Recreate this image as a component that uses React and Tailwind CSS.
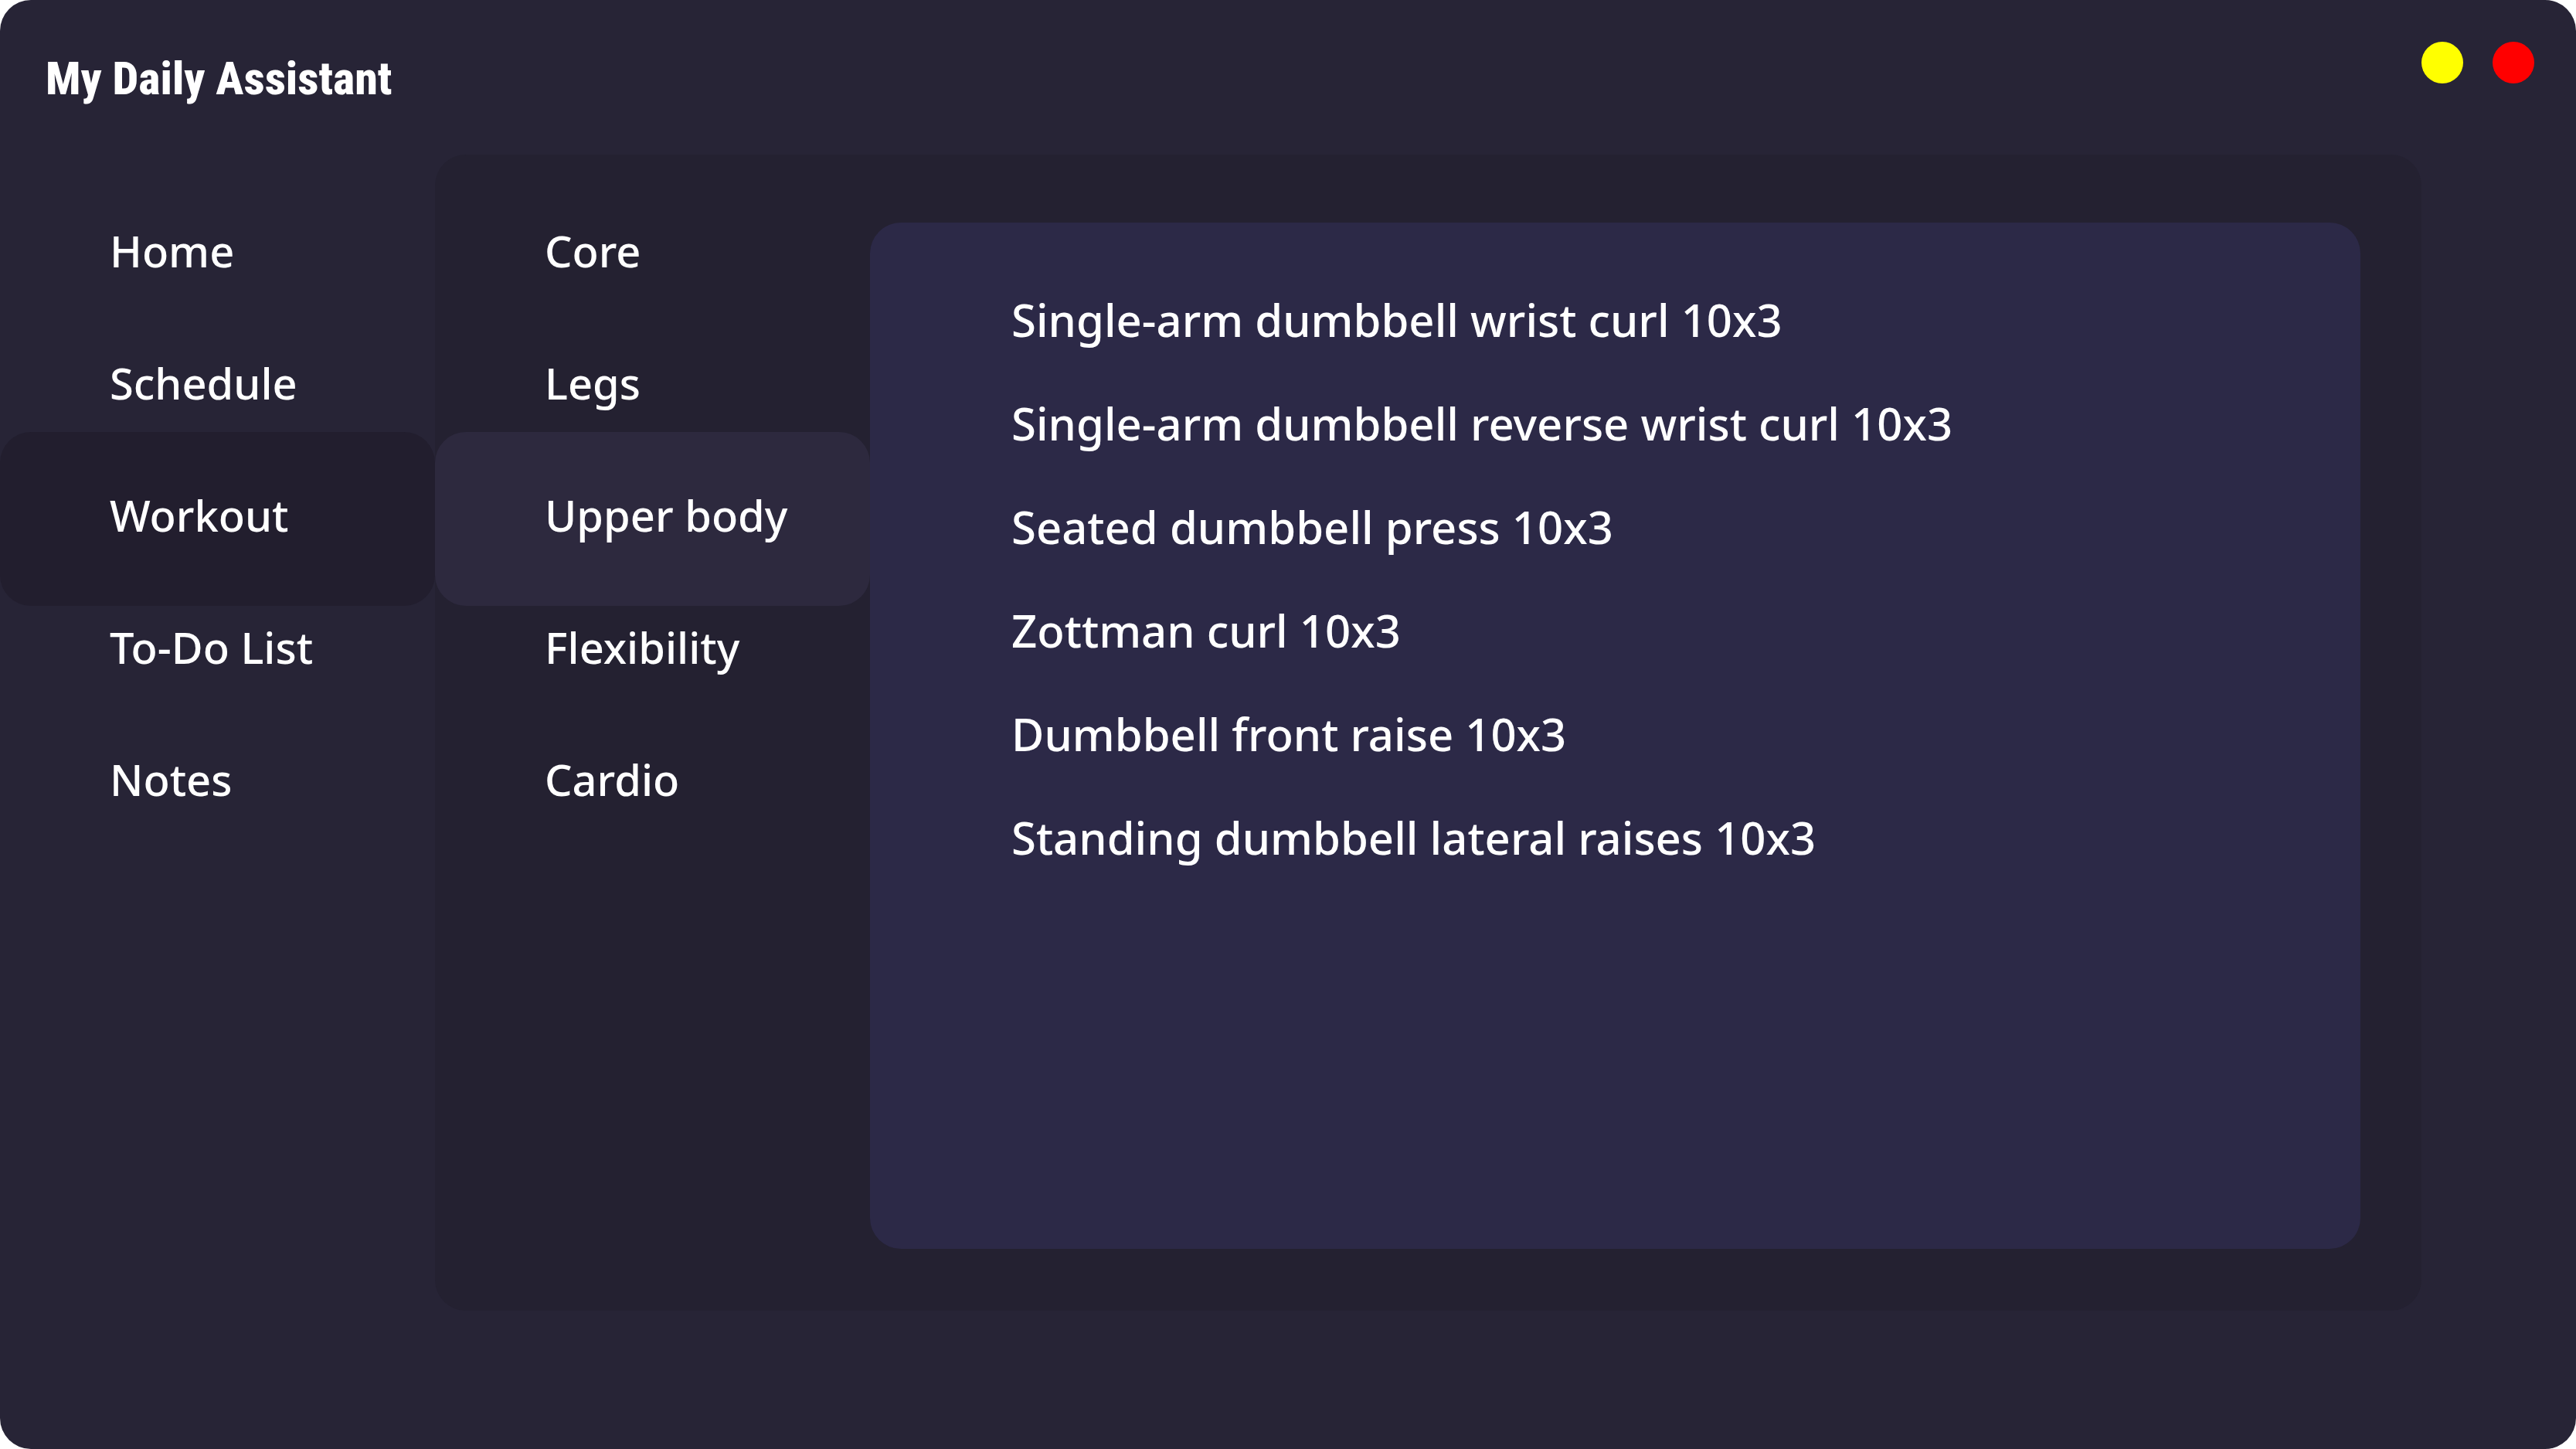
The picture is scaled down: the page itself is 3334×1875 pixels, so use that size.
const sections = ["Home", "Schedule", "Workout", "To-Do List", "Notes"];
const categories = ["Core", "Legs", "Upper body", "Flexibility", "Cardio"];
const exercises = [
  "Single-arm dumbbell wrist curl 10x3",
  "Single-arm dumbbell reverse wrist curl 10x3",
  "Seated dumbbell press 10x3",
  "Zottman curl 10x3",
  "Dumbbell front raise 10x3",
  "Standing dumbbell lateral raises 10x3",
];

function Menu({ label, items, active, activeClass }) {
  return (
    <nav aria-label={label} className="w-[563px] shrink-0 pt-[17px]">
      <ul className="flex flex-col">
        {items.map((item) => (
          <li key={item} className="-mb-[54px]">
            <button
              type="button"
              aria-current={item === active ? "page" : undefined}
              className={
                "flex h-[225px] w-full items-center rounded-[40px] pb-[12px] pl-[142px] text-left " +
                (item === active ? activeClass : "")
              }
            >
              {item}
            </button>
          </li>
        ))}
      </ul>
    </nav>
  );
}

export default function App() {
  return (
    <div className="min-h-screen bg-white">
      <div className="flex min-h-screen flex-col rounded-[40px] bg-[#272436] font-['Noto_Sans','Open_Sans',sans-serif] text-[56px] leading-[76px] font-medium text-white">
        <header className="flex h-[200px] items-start justify-between pt-[54px] pr-[54px] pl-[59px]">
          <h1 className="font-['Roboto_Condensed','Roboto',sans-serif] text-[60px] leading-[96px] font-extrabold">
            My Daily Assistant
          </h1>
          <div className="flex gap-[38px]">
            <button type="button" aria-label="Minimize" className="size-[54px] rounded-full bg-[#ffff00]" />
            <button type="button" aria-label="Close" className="size-[54px] rounded-full bg-[#ff0000]" />
          </div>
        </header>
        <div className="mb-[179px] flex flex-1">
          <Menu label="Main" items={sections} active="Workout" activeClass="bg-[#221e2e]" />
          <div className="mr-[200px] flex flex-1 rounded-[40px] bg-[#242131] pr-[79px]">
            <Menu label="Workout categories" items={categories} active="Upper body" activeClass="bg-[#2d293e]" />
            <main className="mt-[88px] mb-[80px] flex-1 rounded-[40px] bg-[#2c2947] pt-[88px] pl-[183px]">
              <ul className="flex flex-col gap-[58px] text-[58px]">
                {exercises.map((exercise) => (
                  <li key={exercise}>{exercise}</li>
                ))}
              </ul>
            </main>
          </div>
        </div>
      </div>
    </div>
  );
}
